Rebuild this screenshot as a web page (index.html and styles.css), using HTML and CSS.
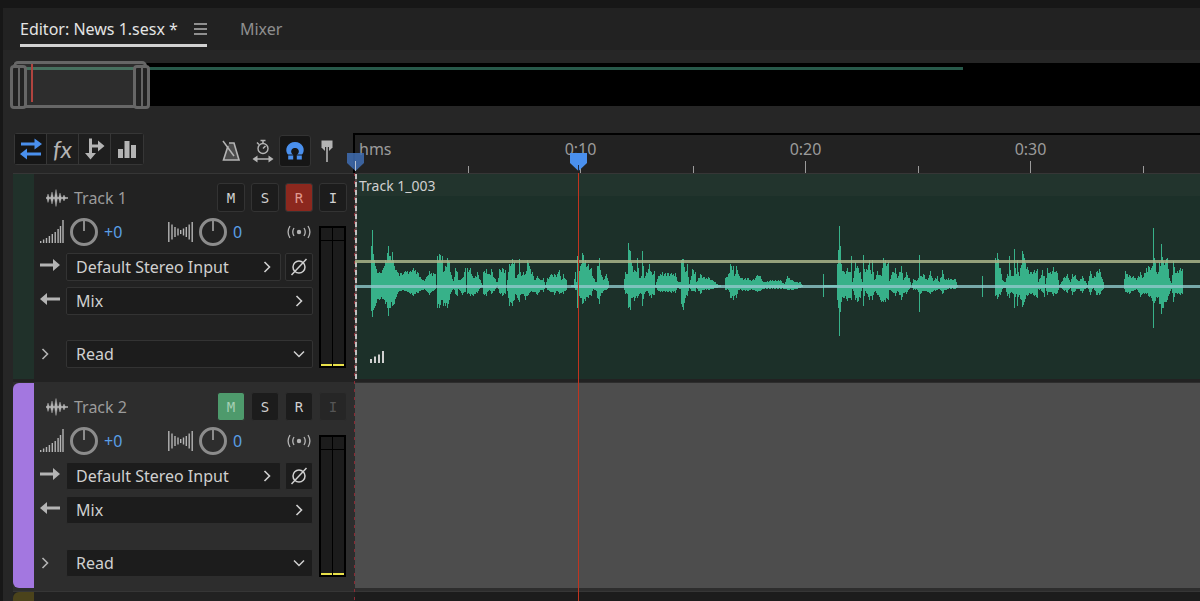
FILE: index.html
```
<!DOCTYPE html>
<html lang="en">
<head>
    <meta charset="UTF-8">
    <meta name="viewport" content="width=device-width, initial-scale=1.0">
    <title>Editor: News 1.sesx</title>
    <link rel="stylesheet" href="styles.css">
</head>
<body>
    <!-- Shared icons -->
    <svg class="sprite" aria-hidden="true">
        <symbol id="i-wave" viewBox="0 0 22 20">
            <path d="M0 10h22" stroke="currentColor" stroke-width="1.500"/>
            <path d="M2 6l1.500 4L2 14.500.8 10zM6 4l1.500 6L6 16l-1.500-6zM10 1.500l1.500 8.500L10 18.500 8.500 10zM14 5l1.500 5-1.500 5-1.500-5zM18 7l1.500 3-1.500 3-1.500-3z" fill="currentColor" stroke="currentColor" stroke-width=".4"/>
        </symbol>
        <symbol id="i-volume" viewBox="0 0 24 24">
            <path d="M.7 21v2M3.600 19.500v3.500M6.500 18v5M9.400 16v7M12.300 14v9M15.200 12v11M18.100 9v14M20.500 6v17M23 0v23" stroke="currentColor" stroke-width="1.400" fill="none"/>
        </symbol>
        <symbol id="i-pan" viewBox="0 0 25 22">
            <path d="M.8 1v20M4 3.500v15M7 6v10M10 7.500v7M12.700 9v4M15.500 7.500v7M18.300 6v10M21.200 3.500v15M24.200 1v20" stroke="currentColor" stroke-width="1.400" fill="none"/>
        </symbol>
        <symbol id="i-monitor" viewBox="0 0 24 14">
            <circle cx="12" cy="7" r="2.200" fill="currentColor"/>
            <path d="M7 3q-2.500 4 0 8M17 3q2.500 4 0 8M3 1q-3.800 6 0 12M21 1q3.800 6 0 12" stroke="currentColor" stroke-width="1.300" fill="none"/>
        </symbol>
        <symbol id="i-in" viewBox="0 0 20 14">
            <path d="M0 5.500h13V1l7 6-7 6V8.500H0z" fill="currentColor"/>
        </symbol>
        <symbol id="i-out" viewBox="0 0 20 14">
            <path d="M20 5.500H7V1L0 7l7 6V8.500h13z" fill="currentColor"/>
        </symbol>
        <symbol id="i-right" viewBox="0 0 8 12">
            <path d="M1.500 1l5 5-5 5" stroke="currentColor" stroke-width="1.600" fill="none"/>
        </symbol>
        <symbol id="i-down" viewBox="0 0 12 8">
            <path d="M1 1.500l5 5 5-5" stroke="currentColor" stroke-width="1.500" fill="none"/>
        </symbol>
        <symbol id="i-phase" viewBox="0 0 18 18">
            <circle cx="9" cy="9" r="6" stroke="currentColor" stroke-width="1.500" fill="none"/>
            <path d="M1.500 17L16.500 1" stroke="currentColor" stroke-width="1.500"/>
        </symbol>
    </svg>

    <div class="app">
        <header class="tabs">
            <div class="tab active">
                <button type="button" class="tab-name">Editor: News 1.sesx *</button>
                <button type="button" class="tab-menu" aria-label="Panel menu">
                    <svg width="13" height="12" viewBox="0 0 13 12"><path d="M0 1h13M0 6h13M0 11h13" stroke="currentColor" stroke-width="1.300"/></svg>
                </button>
            </div>
            <div class="tab">
                <button type="button" class="tab-name">Mixer</button>
            </div>
        </header>

        <div class="navigator">
            <div class="nav-range"></div>
            <div class="nav-window"></div>
        </div>

        <div class="toolbar-row">
            <div class="toolbar">
                <div class="modes">
                    <button type="button" class="mode on" aria-label="Inputs and outputs">
                        <svg width="24" height="24" viewBox="0 0 24 24"><path d="M2 7h14M22 17H8" stroke="currentColor" stroke-width="3"/><path d="M15.500 1.500L23 7l-7.500 5.500zM8 11.500L1 17l7 5.500z" fill="currentColor"/></svg>
                    </button>
                    <button type="button" class="mode fx" aria-label="Effects"><i>fx</i></button>
                    <button type="button" class="mode" aria-label="Sends">
                        <svg width="22" height="24" viewBox="0 0 22 24"><path d="M6.500 1.500v15M6.500 9h9" stroke="currentColor" stroke-width="3"/><path d="M1 16h11l-5.500 6.500zM14 3.500L20.500 9 14 14.500z" fill="currentColor"/></svg>
                    </button>
                    <button type="button" class="mode" aria-label="EQ">
                        <svg width="20" height="24" viewBox="0 0 20 24"><path d="M1 12h5v9H1zM7.500 4h5v17h-5zM14 8h5v13h-5z" fill="currentColor"/></svg>
                    </button>
                </div>
                <div class="tools">
                    <button type="button" class="tool" aria-label="Metronome">
                        <svg width="20" height="24" viewBox="0 0 20 24"><path d="M8 4h5l5 17H2.500L7 7" stroke="currentColor" stroke-width="1.600" fill="#4c4c4c"/><path d="M2 2l11 15" stroke="currentColor" stroke-width="1.500"/></svg>
                    </button>
                    <button type="button" class="tool" aria-label="Time stretch">
                        <svg width="22" height="24" viewBox="0 0 22 24"><circle cx="11" cy="9.500" r="5" stroke="currentColor" stroke-width="1.400" fill="none"/><path d="M11 4V1.500M8.500 1.500h5M11 9.500l2.500-2.500M5 3.500L7 5.500M4 20h14" stroke="currentColor" stroke-width="1.500"/><path d="M5.500 16.500v7L.5 20zM16.500 16.500v7l5-3.500z" fill="currentColor"/></svg>
                    </button>
                    <button type="button" class="tool on" aria-label="Snapping">
                        <svg width="20" height="20" viewBox="0 0 20 20"><path d="M3.200 18.500V14C1 11.500.8 8.500 2 5.800 3.500 2.500 6.500 1 10 1s6.500 1.500 8 4.800c1.200 2.700 1 5.700-1.200 8.200v4.500h-5V14c2-1.500 2.500-3.500 1.700-5-.7-1.400-2-2-3.500-2s-2.800.6-3.500 2c-.8 1.500-.3 3.500 1.700 5v4.500z" fill="currentColor"/><path d="M2.500 14h6M11.500 14h6" stroke="#161616" stroke-width="1"/></svg>
                    </button>
                    <button type="button" class="tool" aria-label="Add marker">
                        <svg width="12" height="24" viewBox="0 0 12 24"><path d="M.5 1.500h11v7L8 12H4L.5 8.500z" fill="currentColor"/><path d="M6 8v15" stroke="#262626" stroke-width="4"/><path d="M6 7v16" stroke="currentColor" stroke-width="1.600"/></svg>
                    </button>
                </div>
            </div>
            <div class="ruler">
                <span class="unit">hms</span>
                <div class="mark">0:10</div>
                <div class="mark">0:20</div>
                <div class="mark">0:30</div>
                <div class="mark rest"></div>
            </div>
        </div>

        <main class="tracks">
            <section class="track">
                <div class="strip green"></div>
                <div class="panel">
                    <div class="head">
                        <svg class="wave-icon"><use href="#i-wave"/></svg>
                        <h2>Track 1</h2>
                        <button type="button" class="sq">M</button>
                        <button type="button" class="sq">S</button>
                        <button type="button" class="sq rec">R</button>
                        <button type="button" class="sq">I</button>
                    </div>
                    <div class="body">
                        <div class="controls">
                            <div class="levels">
                                <svg class="vol-icon"><use href="#i-volume"/></svg>
                                <input type="range" class="knob" id="vol1" aria-label="Volume">
                                <output class="value" for="vol1">+0</output>
                                <svg class="pan-icon"><use href="#i-pan"/></svg>
                                <input type="range" class="knob" id="pan1" aria-label="Pan">
                                <output class="value" for="pan1">0</output>
                                <svg class="monitor-icon"><use href="#i-monitor"/></svg>
                            </div>
                            <div class="line">
                                <label for="in1" aria-label="Input"><svg class="arrow"><use href="#i-in"/></svg></label>
                                <div class="field">
                                    <select id="in1"><option>Default Stereo Input</option></select>
                                    <svg class="chev-right"><use href="#i-right"/></svg>
                                </div>
                                <button type="button" class="phase" aria-label="Invert phase"><svg><use href="#i-phase"/></svg></button>
                            </div>
                            <div class="line">
                                <label for="out1" aria-label="Output"><svg class="arrow"><use href="#i-out"/></svg></label>
                                <div class="field">
                                    <select id="out1"><option>Mix</option></select>
                                    <svg class="chev-right"><use href="#i-right"/></svg>
                                </div>
                            </div>
                            <div class="line automation">
                                <button type="button" class="expand" aria-label="Show automation lanes"><svg class="chev-right"><use href="#i-right"/></svg></button>
                                <div class="field">
                                    <select aria-label="Automation mode"><option>Read</option></select>
                                    <svg class="chev-down"><use href="#i-down"/></svg>
                                </div>
                            </div>
                        </div>
                        <div class="meter"><div></div><div></div></div>
                    </div>
                </div>
                <div class="lane">
                    <div class="clip">
                        <svg class="waveform" id="waveform" height="206"></svg>
                        <span class="clip-name">Track 1_003</span>
                        <svg class="clip-gain" width="14" height="12" viewBox="0 0 14 12"><path d="M0 8h2v4H0zM4 5.500h2V12H4zM8 3.500h2V12H8zM12 0h2v12h-2z" fill="currentColor"/></svg>
                    </div>
                </div>
            </section>

            <section class="track selected">
                <div class="strip purple"></div>
                <div class="panel">
                    <div class="head">
                        <svg class="wave-icon"><use href="#i-wave"/></svg>
                        <h2>Track 2</h2>
                        <button type="button" class="sq mute">M</button>
                        <button type="button" class="sq">S</button>
                        <button type="button" class="sq">R</button>
                        <button type="button" class="sq" disabled>I</button>
                    </div>
                    <div class="body">
                        <div class="controls">
                            <div class="levels">
                                <svg class="vol-icon"><use href="#i-volume"/></svg>
                                <input type="range" class="knob" id="vol2" aria-label="Volume">
                                <output class="value" for="vol2">+0</output>
                                <svg class="pan-icon"><use href="#i-pan"/></svg>
                                <input type="range" class="knob" id="pan2" aria-label="Pan">
                                <output class="value" for="pan2">0</output>
                                <svg class="monitor-icon"><use href="#i-monitor"/></svg>
                            </div>
                            <div class="line">
                                <label for="in2" aria-label="Input"><svg class="arrow"><use href="#i-in"/></svg></label>
                                <div class="field">
                                    <select id="in2"><option>Default Stereo Input</option></select>
                                    <svg class="chev-right"><use href="#i-right"/></svg>
                                </div>
                                <button type="button" class="phase" aria-label="Invert phase"><svg><use href="#i-phase"/></svg></button>
                            </div>
                            <div class="line">
                                <label for="out2" aria-label="Output"><svg class="arrow"><use href="#i-out"/></svg></label>
                                <div class="field">
                                    <select id="out2"><option>Mix</option></select>
                                    <svg class="chev-right"><use href="#i-right"/></svg>
                                </div>
                            </div>
                            <div class="line automation">
                                <button type="button" class="expand" aria-label="Show automation lanes"><svg class="chev-right"><use href="#i-right"/></svg></button>
                                <div class="field">
                                    <select aria-label="Automation mode"><option>Read</option></select>
                                    <svg class="chev-down"><use href="#i-down"/></svg>
                                </div>
                            </div>
                        </div>
                        <div class="meter"><div></div><div></div></div>
                    </div>
                </div>
                <div class="lane"></div>
            </section>

            <section class="track collapsed">
                <div class="strip olive"></div>
                <div></div>
                <div class="lane"></div>
            </section>

            <div class="start-line"></div>
            <svg class="start-marker" width="17" height="18" viewBox="0 0 17 18"><path d="M0 0h17v10l-8.500 8L0 10z" fill="#3f6db3" fill-opacity=".85"/><path d="M8.500 8v10" stroke="#b9c3d1"/></svg>
            <div class="playhead"></div>
            <svg class="playhead-marker" width="17" height="18" viewBox="0 0 17 18"><path d="M0 0h17v10l-8.500 8L0 10z" fill="#4a90ee"/><path d="M8.500 12v6" stroke="#1c2b44"/></svg>
        </main>
    </div>

    <script src="waveform.js"></script>
</body>
</html>
```
FILE: styles.css
```
* {
    margin: 0;
    padding: 0;
    box-sizing: border-box;
}

body {
    font-family: 'Noto Sans', 'Open Sans', sans-serif;
    font-size: 16px;
    color: #d0d0d0;
    background: #171717;
}

button,
select {
    font: inherit;
    color: inherit;
    background: none;
    border: none;
}

svg {
    display: block;
    flex: none;
}

.sprite {
    position: absolute;
    width: 0;
    height: 0;
}

.app {
    display: flex;
    flex-direction: column;
    min-height: 100vh;
    border-left: 3px solid #171717;
    border-top: 8px solid #171717;
    background: #262626;
}

/* Tabs */
.tabs {
    display: flex;
    gap: 33px;
    height: 42px;
    padding-left: 17px;
    background: #222;
}

.tab {
    display: flex;
    align-items: center;
    gap: 16px;
    height: 39px;
    padding-top: 5px;
    border-bottom: 3px solid transparent;
    color: #8f8f8f;
}

.tab.active {
    color: #e4e4e4;
    border-bottom-color: #d0d0d0;
}

.tab-menu {
    color: #b4b4b4;
}

/* Navigator */
.navigator {
    position: relative;
    height: 43px;
    margin: 13px 0 27px 10px;
    padding-top: 4px;
    background: #000;
}

.nav-range {
    width: 80%;
    height: 3px;
    background: #28594a;
}

.nav-window {
    position: absolute;
    left: 0;
    top: -2px;
    width: 134px;
    height: 47px;
    border: 3px solid #666;
    border-radius: 5px;
    background:
        linear-gradient(#b0443f, #b0443f) 15px 0 / 2px 38px no-repeat,
        linear-gradient(#47705f, #47705f) 0 3px / 100% 3px no-repeat,
        #2d2d2d;
}

.nav-window::before,
.nav-window::after {
    content: '';
    position: absolute;
    top: 1px;
    width: 11px;
    height: 38px;
    border: 3px solid #666;
    border-radius: 4px;
    background: linear-gradient(#666, #666) center / 2px 100% no-repeat #222;
}

.nav-window::before {
    left: -6px;
}

.nav-window::after {
    right: -6px;
}

/* Toolbar and ruler */
.toolbar-row {
    display: flex;
    height: 40px;
}

.toolbar {
    display: flex;
    justify-content: space-between;
    align-items: flex-start;
    flex: 0 0 350px;
    padding-left: 11px;
}

.modes {
    display: flex;
    height: 32px;
    border: 1px solid #363636;
    border-radius: 3px;
}

.mode {
    display: flex;
    align-items: center;
    justify-content: center;
    width: 32px;
    background: #1e1e1e;
    color: #b4b4b4;
    border-right: 1px solid #363636;
}

.mode:last-child {
    border-right: none;
}

.mode.on,
.tool.on {
    background: #161616;
    color: #4a90ee;
}

.mode.fx {
    font-family: Lato, 'Noto Sans', sans-serif;
    font-size: 24px;
    line-height: 24px;
}

.tools {
    display: flex;
    padding: 2px 10px 0 0;
}

.tool {
    display: flex;
    align-items: center;
    justify-content: center;
    width: 32px;
    height: 32px;
    border: 1px solid transparent;
    border-radius: 3px;
    color: #b4b4b4;
}

.tool.on {
    border-color: #333;
}

.ruler {
    display: flex;
    flex: 1;
    min-width: 0;
    overflow: hidden;
    border-top: 2px solid #000;
    border-left: 2px solid #000;
    background: #222;
    color: #9b9b9b;
    line-height: 28px;
}

.unit {
    flex: 0 0 113px;
    padding-left: 4px;
}

.mark {
    flex: 0 0 225px;
    text-align: center;
    background:
        linear-gradient(#9b9b9b, #9b9b9b) left bottom / 1px 7px no-repeat,
        linear-gradient(#9b9b9b, #9b9b9b) center bottom / 1px 12px no-repeat;
}

.mark.rest {
    flex: 1;
    background: linear-gradient(#9b9b9b, #9b9b9b) left bottom / 1px 7px no-repeat;
}

/* Tracks */
.tracks {
    display: flex;
    flex-direction: column;
    flex: 1;
    position: relative;
}

.track {
    display: grid;
    grid-template-columns: 21px 321px 1fr;
    margin-left: 10px;
    border-top: 1px solid #363636;
    background: #222;
}

.track.selected {
    border-top-color: #2d2d2d;
    background: #2d2d2d;
}

.track.collapsed {
    flex: 1;
    min-height: 10px;
}

.strip {
    margin-bottom: 3px;
}

.strip.green {
    background: #20312a;
}

.strip.purple {
    background: #a377e0;
    border-radius: 6px 0 0 6px;
}

.strip.olive {
    margin-bottom: 0;
    background: #4b431b;
    border-radius: 6px 0 0 0;
}

.panel {
    padding: 9px 8px 14px 6px;
}

.head {
    display: flex;
    align-items: center;
    gap: 6px;
    height: 29px;
    padding-left: 6px;
}

.wave-icon {
    width: 22px;
    height: 20px;
    color: #b4b4b4;
}

.head h2 {
    flex: 1;
    font-size: 16px;
    font-weight: 400;
    color: #9b9b9b;
}

.sq {
    width: 28px;
    height: 29px;
    border: 1px solid #333;
    border-radius: 3px;
    background: #1c1c1c;
    font-family: 'DejaVu Sans Mono', monospace;
    font-size: 14px;
}

.sq.rec {
    background: #8c281e;
    color: #e09a90;
}

.sq.mute {
    background: #4e9a6c;
    color: #a5cfb4;
}

.sq:disabled {
    background: #262626;
    color: #555;
}

.body {
    display: flex;
    gap: 6px;
    padding-top: 5px;
}

.controls {
    display: flex;
    flex-direction: column;
    gap: 6px;
    flex: 0 0 273px;
}

.levels {
    display: flex;
    align-items: center;
    gap: 6px;
    height: 30px;
    padding-right: 2px;
    color: #b4b4b4;
}

.vol-icon {
    width: 24px;
    height: 24px;
}

.pan-icon {
    width: 25px;
    height: 22px;
}

.monitor-icon {
    width: 24px;
    height: 14px;
    margin-left: auto;
}

.knob {
    appearance: none;
    flex: none;
    width: 28px;
    height: 28px;
    border: 3px solid #8c8c8c;
    border-radius: 50%;
    background: linear-gradient(#8c8c8c, #8c8c8c) center top / 2px 10px no-repeat;
}

.knob::-webkit-slider-thumb {
    appearance: none;
    width: 0;
    height: 0;
}

.value {
    color: #5a9fe6;
}

.value:nth-of-type(1) {
    flex: 0 0 58px;
}

.line {
    display: flex;
    gap: 4px;
    height: 28px;
}

.line label,
.expand {
    flex: 0 0 22px;
    padding-top: 5px;
    color: #b4b4b4;
}

.expand {
    padding: 0 0 0 1px;
}

.arrow {
    width: 20px;
    height: 14px;
}

.automation {
    margin-top: 19px;
}

.field {
    display: flex;
    align-items: center;
    position: relative;
    flex: 1;
}

.field select {
    appearance: none;
    width: 100%;
    height: 28px;
    padding: 0 24px 0 9px;
    border: 1px solid #333;
    border-radius: 2px;
    background: #1c1c1c;
    color: #d0d0d0;
}

.field svg {
    position: absolute;
    right: 10px;
    pointer-events: none;
}

.chev-right {
    width: 8px;
    height: 12px;
}

.chev-down {
    width: 12px;
    height: 8px;
}

.field .chev-down {
    right: 8px;
}

.phase {
    display: flex;
    align-items: center;
    justify-content: center;
    width: 28px;
    border: 1px solid #333;
    border-radius: 2px;
    background: #1c1c1c;
}

.phase svg {
    width: 18px;
    height: 18px;
}

.selected .sq,
.selected select,
.selected .phase {
    border-color: #2d2d2d;
}

.meter {
    display: grid;
    grid-template-columns: 1fr 1fr;
    gap: 1px;
    width: 27px;
    margin-top: 9px;
    padding: 2px;
    background: #000;
}

.meter div {
    background:
        linear-gradient(#000, #000) 0 12px / 100% 1px no-repeat,
        linear-gradient(#e9e14a, #e9e14a) 0 100% / 100% 2px no-repeat,
        #1c1c1c;
}

/* Lanes */
.lane {
    min-width: 0;
    overflow: hidden;
    margin-bottom: 3px;
    background: #4d4d4d;
}

.collapsed .lane {
    margin-bottom: 0;
    background: #1c1c1c;
}

.clip {
    position: relative;
    height: 100%;
    background: linear-gradient(#22342d 22px, #1c3029 22px);
    color: #d0d0d0;
}

/* Dashed edge where the clip starts */
.clip::before {
    content: '';
    position: absolute;
    left: 0;
    top: 0;
    width: 2px;
    height: 100%;
    background: repeating-linear-gradient(#c0c0c0 0 5px, #5a4a48 5px 8px);
}

.waveform {
    position: absolute;
    left: 0;
    top: 0;
    width: 100%;
}

.clip-name {
    position: absolute;
    left: 4px;
    top: 2px;
    font-size: 14px;
    line-height: 19px;
}

.clip-gain {
    position: absolute;
    left: 15px;
    bottom: 16px;
}

/* Cursors over the timeline */
.start-line,
.playhead {
    position: absolute;
    top: 0;
    bottom: 0;
}

.start-line {
    left: 351px;
    width: 1px;
    background: repeating-linear-gradient(#8c2a34 0 3px, transparent 3px 8px);
}

.start-marker,
.playhead-marker {
    position: absolute;
    top: -20px;
}

.start-marker {
    left: 344px;
}

.playhead {
    left: 575px;
    width: 1px;
    background: #c0341f;
}

.playhead-marker {
    left: 567px;
}
```
FILE: waveform.js
```
// Envelope of the clip: x, height above and depth below the centre line
const peaks = `
15 0 0,16 40 25,17 56 31,18 32 24,20 20 20,25 13 13,28 18 13,32 33 22,33 40 30,35 30 22,37 34 20,39 20 18,
42 14 8,45 13 5,50 15 5,55 15 8,58 18 10,62 14 7,68 6 4,72 10 6,74 15 9,78 13 5,80 12 3,81 0 0,
82 30 22,84 32 22,87 30 14,88 14 20,92 28 22,94 24 14,95 14 8,98 5 3,100 18 8,102 14 10,103 6 3,107 8 9,110 18 6,111 0 0,
112 18 8,115 18 10,118 8 10,122 14 7,125 6 2,127 1 1,128 14 8,131 17 10,134 12 4,136 17 8,139 8 5,142 4 0,144 17 7,147 18 10,150 16 8,151 0 0,
154 22 20,155 20 16,157 27 20,159 24 14,160 8 8,163 12 14,164 27 16,166 10 8,168 14 8,170 12 14,172 26 10,174 20 7,177 14 6,179 6 6,
182 10 9,185 6 4,188 8 6,190 1 1,192 8 4,196 12 6,199 12 9,202 12 5,204 16 8,206 6 7,208 12 8,211 6 4,212 0 0,
218 1 1,220 14 4,221 4 4,222 30 22,224 15 10,227 33 18,230 26 15,233 22 12,236 18 10,238 8 3,241 4 5,242 20 12,244 28 18,245 16 10,248 6 5,251 12 4,253 5 2,254 0 0,
268 0 0,270 14 8,272 12 8,273 43 22,275 35 24,276 24 12,279 16 15,281 14 10,282 28 12,284 8 8,286 10 8,287 35 20,289 8 8,291 14 5,294 22 10,296 14 12,299 15 9,300 1 1,
303 10 5,307 14 6,312 13 6,320 13 7,322 5 2,325 4 3,326 26 18,328 27 24,330 14 12,332 22 10,334 2 2,336 10 5,337 17 5,340 14 6,341 4 2,
343 8 5,345 12 8,348 9 4,353 9 4,358 5 3,364 1 1,369 0 0,370 8 4,373 12 4,375 22 12,378 20 14,379 10 10,381 20 12,383 12 4,387 8 5,
392 8 5,397 6 4,402 11 6,405 10 5,408 4 3,415 6 3,425 6 3,429 2 3,432 10 4,438 5 4,445 4 2,448 0 0,
467 0 0,468 12 11,469 1 1,481 1 1,482 22 14,483 36 22,484 60 50,485 40 26,486 22 16,489 14 12,492 18 15,495 14 12,496 30 14,497 4 3,
500 24 14,502 20 16,505 14 12,507 4 2,508 31 20,510 14 5,514 26 14,516 12 10,517 26 14,519 6 6,522 15 9,526 10 16,528 28 16,530 26 16,533 24 14,534 5 4,
537 14 6,540 18 10,542 8 5,546 20 14,548 6 7,551 14 8,554 8 3,556 0 0,558 7 4,562 6 4,563 8 6,564 31 26,565 10 8,568 12 5,572 6 6,575 15 8,578 5 5,
582 10 4,584 4 3,587 16 8,590 6 4,593 8 3,600 7 3,602 1 1,604 0 0,626 0 0,627 10 11,628 0 0,639 0 0,640 28 10,642 33 13,645 18 9,647 6 3,
650 4 2,652 12 10,653 10 8,654 30 12,656 10 6,658 10 8,659 37 22,661 12 8,662 26 20,664 10 9,667 35 21,669 28 16,672 19 10,675 14 8,682 17 12,683 4 3,
687 16 6,689 10 11,690 2 2,692 18 9,695 14 6,698 19 10,702 13 7,704 1 1,708 8 4,712 12 7,715 4 2,717 12 9,720 11 5,723 5 3,727 10 7,730 5 3,732 1 1,
735 15 9,738 8 2,741 14 9,744 17 9,748 4 3,749 0 0,768 0 0,770 15 6,774 11 8,778 10 5,782 8 4,785 14 11,787 8 8,791 18 8,793 20 10,797 20 15,
798 58 42,799 28 17,802 12 12,804 24 18,805 20 18,806 42 28,808 25 22,812 28 14,814 8 8,816 3 3,818 25 16,820 13 7,825 18 9,827 17 8,828 0 0,845 0 0
`.trim().split(',').map(p => p.trim().split(' ').map(Number));

const center = 112;
let d = '';

for (let i = 0; i < peaks.length - 1; i++) {
    const [x0, up0, down0] = peaks[i];
    const [x1, up1, down1] = peaks[i + 1];

    for (let x = x0; x < x1; x++) {
        const t = (x - x0) / (x1 - x0);
        const rough = x === x0 ? 1 : 0.75 + ((x * 37) % 11) / 40;
        const up = Math.round((up0 + (up1 - up0) * t) * rough);
        const down = Math.round((down0 + (down1 - down0) * t) * rough);
        if (up + down > 0) {
            d += `M${x} ${center - up}h1v${up + down}h-1z`;
        }
    }
}

document.getElementById('waveform').innerHTML = `
    <path d="${d}" fill="#37b189"/>
    <rect y="111" width="100%" height="3" fill="#8fc8cb" fill-opacity=".8"/>
    <rect y="86" width="100%" height="3" fill="#a9b58a" fill-opacity=".85"/>`;
```
